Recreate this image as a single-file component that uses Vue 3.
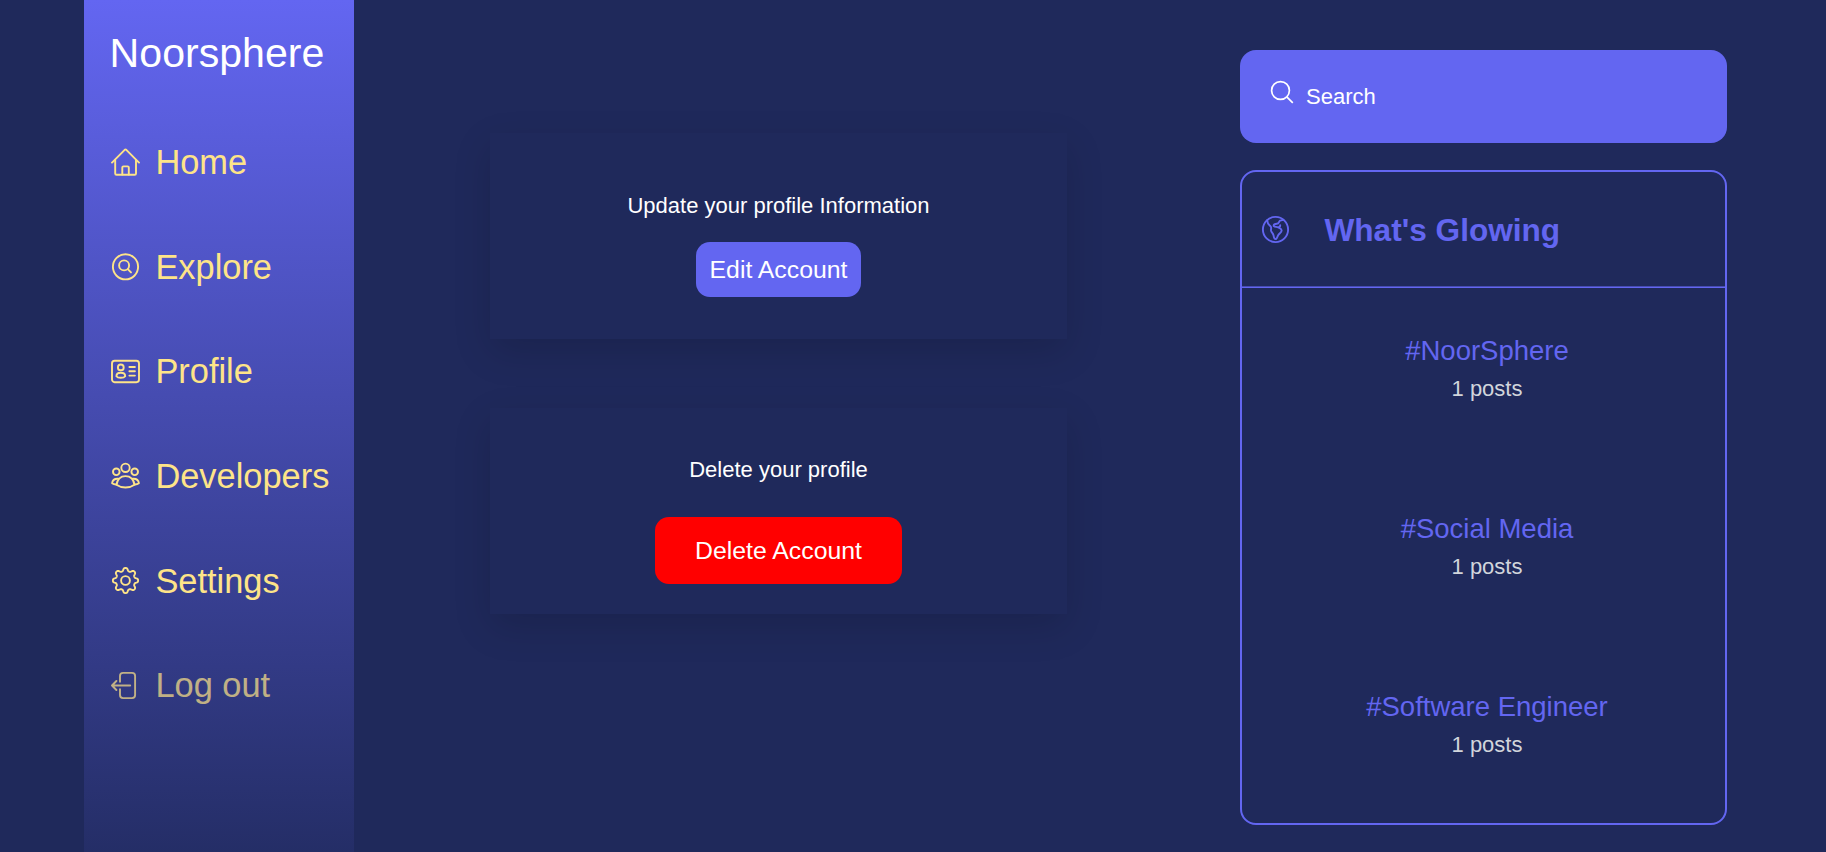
<script setup>
const navItems = [
  { label: 'Home', icon: 'home' },
  { label: 'Explore', icon: 'explore' },
  { label: 'Profile', icon: 'profile' },
  { label: 'Developers', icon: 'people' },
  { label: 'Settings', icon: 'gear' },
  { label: 'Log out', icon: 'logout', muted: true },
]

const trends = ['#NoorSphere', '#Social Media', '#Software Engineer']

// Closed outline of an eight-lobed cog centred on (14.5, 14.5)
function cogPath() {
  const steps = 160
  const pts = []
  for (let i = 0; i < steps; i++) {
    const a = (i / steps) * Math.PI * 2
    const wave = Math.tanh(1.5 * Math.cos(8 * a)) / Math.tanh(1.5)
    const r = 11.1 + 1.5 * wave
    pts.push(`${(14.5 + r * Math.sin(a)).toFixed(2)} ${(14.5 - r * Math.cos(a)).toFixed(2)}`)
  }
  return `M${pts.join('L')}Z`
}
const cog = cogPath()
</script>

<template>
  <div class="page">
    <aside class="sidebar">
      <h1 class="brand">Noorsphere</h1>
      <nav class="nav">
        <a v-for="item in navItems" :key="item.label" class="nav-item" :class="{ muted: item.muted }">
          <svg class="icon" viewBox="0 0 29 29">
            <template v-if="item.icon === 'home'">
              <path d="M1 14.6 13.7 1.8Q14.5 1.1 15.3 1.8L28 14.6" />
              <path d="M4.2 12.2V25.4Q4.2 26.7 5.5 26.7H23.7Q25 26.7 25 25.4V12.2" />
              <path d="M11.3 26.5V19.6Q11.3 18.4 12.5 18.4H16.6Q17.8 18.4 17.8 19.6V26.5" />
            </template>
            <template v-else-if="item.icon === 'explore'">
              <circle cx="14.5" cy="14.8" r="12.6" />
              <circle cx="13.1" cy="13.4" r="5" />
              <path d="M16.8 17.1 20 20.4" />
            </template>
            <template v-else-if="item.icon === 'profile'">
              <rect x="1" y="3.8" width="27" height="21.4" rx="2.6" />
              <circle cx="9.8" cy="10.4" r="2.9" />
              <path d="M5.4 19.2C5.4 17 7.2 15.8 9.8 15.8S14.2 17 14.2 19.2C13.4 20.4 11.6 20.8 9.8 20.8S6.2 20.4 5.4 19.2Z" />
              <path d="M18.4 10H23.9M18.4 14.3H23.9M18.4 18.6H23.9" />
            </template>
            <template v-else-if="item.icon === 'people'">
              <circle cx="14.5" cy="6.8" r="4.2" />
              <circle cx="5.3" cy="10.8" r="3.3" />
              <circle cx="23.7" cy="10.8" r="3.3" />
              <path d="M5.5 23.8C6.4 18.2 9.8 15.1 14.5 15.1S22.6 18.2 23.5 23.8C21 25.6 18 26.5 14.5 26.5S8 25.6 5.5 23.8Z" />
              <path d="M7.2 17.8C3.8 17.6 1.5 19.2 1.1 22.2 2.2 22.9 3.6 23.3 5.2 23.5M21.8 17.8C25.2 17.6 27.5 19.2 27.9 22.2 26.8 22.9 25.4 23.3 23.8 23.5" />
            </template>
            <template v-else-if="item.icon === 'gear'">
              <path :d="cog" />
              <circle cx="14.5" cy="14.5" r="4.4" />
            </template>
            <template v-else>
              <path d="M9 10.8V5Q9 1.9 12.1 1.9H21Q24.1 1.9 24.1 5V24Q24.1 27.1 21 27.1H12.1Q9 27.1 9 24V18.2" />
              <path d="M19.2 14.5H1.2M5.4 10 1 14.5 5.4 19" />
            </template>
          </svg>
          <span>{{ item.label }}</span>
        </a>
      </nav>
    </aside>

    <main class="content">
      <section class="card">
        <p>Update your profile Information</p>
        <button class="btn btn-edit">Edit Account</button>
      </section>
      <section class="card card-delete">
        <p>Delete your profile</p>
        <button class="btn btn-delete">Delete Account</button>
      </section>
    </main>

    <aside class="right">
      <div class="search">
        <svg class="search-icon" viewBox="0 0 24 24">
          <circle cx="10.5" cy="10.5" r="8.9" />
          <path d="M16.8 16.8 22.8 22.8" />
        </svg>
        <span>Search</span>
      </div>
      <section class="trends">
        <header class="trends-head">
          <svg class="icon" viewBox="0 0 29 29">
            <circle cx="14.5" cy="14.5" r="12.6" />
            <path d="M6.2 5.2C6.5 9.5 8.3 10.2 9.6 11.4 11 12.8 9.4 14.2 10.2 16.2 11 18 12.2 18.2 12.6 20.6 12.9 22.8 13.6 24.4 15 24 16.6 23.4 16.2 21.2 17.4 19.8 18.8 18.2 21 17.2 20.6 15.2 20.1 13 17.6 13.2 16.6 12.2 15.6 11.4 14 12.4 12.8 11.2 12.2 9.6 14 8.8 15.8 8.8 18.2 8.8 17.6 6.8 19 5.6L22.4 4.8M17.4 12.2C18.6 12.2 19.2 11.2 19.2 10.2" />
          </svg>
          <h2>What's Glowing</h2>
        </header>
        <ul class="trend-list">
          <li v-for="tag in trends" :key="tag">
            <a class="tag">{{ tag }}</a>
            <span class="count">1 posts</span>
          </li>
        </ul>
      </section>
    </aside>
  </div>
</template>

<style>
body {
  background: #1f295b;
}
</style>

<style scoped>
.page {
  display: flex;
  box-sizing: border-box;
  height: 852px;
  padding-left: 84px;
  overflow: hidden;
  background: #1f295b;
  color: #fff;
  font-family: "Liberation Sans", Arial, sans-serif;
  font-size: 22px;
}
h1, h2, p, ul {
  margin: 0;
  padding: 0;
}
.icon {
  width: 29px;
  height: 29px;
  flex: none;
  fill: none;
  stroke: currentColor;
  stroke-width: 1.9;
  stroke-linecap: round;
  stroke-linejoin: round;
}
.sidebar {
  box-sizing: border-box;
  flex: none;
  width: 270px;
  height: 925px;
  padding: 29px 0 0 27px;
  background: linear-gradient(#6366f1, #1f295b);
}
.brand {
  height: 48px;
  margin-left: -1.4px;
  font-size: 41.1px;
  font-weight: 400;
  line-height: 48px;
}
.nav {
  display: flex;
  flex-direction: column;
  margin-top: 65.2px;
}
.nav-item {
  display: flex;
  align-items: center;
  gap: 15.4px;
  height: 40px;
  margin-bottom: 64.6px;
  color: #fee488;
  font-size: 34.4px;
  line-height: 40px;
  white-space: nowrap;
}
.nav-item.muted {
  opacity: 0.7;
}
.content {
  display: flex;
  flex: none;
  flex-direction: column;
  gap: 69px;
  width: 577px;
  margin-left: 136px;
  padding-top: 133px;
}
.card {
  display: flex;
  box-sizing: border-box;
  flex-direction: column;
  align-items: center;
  height: 206px;
  padding-top: 60px;
  background: #1f295b;
  box-shadow: 0 13px 36px rgba(0, 0, 0, 0.14);
}
.card p {
  line-height: 25px;
}
.btn {
  border: 0;
  border-radius: 14px;
  color: #fff;
  font: inherit;
  font-size: 24.8px;
  line-height: 28px;
}
.btn-edit {
  width: 165px;
  height: 55px;
  margin-top: 24px;
  padding: 0;
  background: #6366f1;
}
.card-delete {
  padding-top: 49px;
}
.btn-delete {
  width: 247px;
  height: 67px;
  margin-top: 35px;
  padding: 0;
  background: #f00;
}
.right {
  width: 487px;
  flex: none;
  margin-left: 173px;
  padding-top: 50px;
}
.search {
  display: flex;
  box-sizing: border-box;
  align-items: center;
  gap: 12px;
  height: 93px;
  padding-left: 30px;
  border-radius: 16px;
  background: #6366f1;
}
.search-icon {
  width: 24px;
  height: 24px;
  margin-top: -9px;
  fill: none;
  stroke: #fff;
  stroke-width: 1.7;
}
.trends {
  box-sizing: border-box;
  height: 655px;
  margin-top: 27px;
  border: 2px solid #6366f1;
  border-radius: 16px;
}
.trends-head {
  display: flex;
  box-sizing: border-box;
  align-items: center;
  gap: 34.5px;
  height: 116px;
  padding-left: 19px;
  border-bottom: 1px solid #6366f1;
  box-shadow: inset 0 -1px #474cb0;
  color: #6366f1;
}
.trends-head h2 {
  padding-top: 1px;
  font-size: 31.6px;
  font-weight: 700;
  line-height: 36px;
}
.trend-list {
  display: flex;
  flex-direction: column;
  gap: 109px;
  padding: 47px 0 0 7px;
  list-style: none;
}
.trend-list li {
  display: flex;
  flex-direction: column;
  align-items: center;
  height: 69px;
}
.tag {
  color: #6366f1;
  font-size: 27.5px;
  line-height: 32px;
}
.count {
  margin-top: 9px;
  color: #d1d5db;
  line-height: 25px;
}
</style>
